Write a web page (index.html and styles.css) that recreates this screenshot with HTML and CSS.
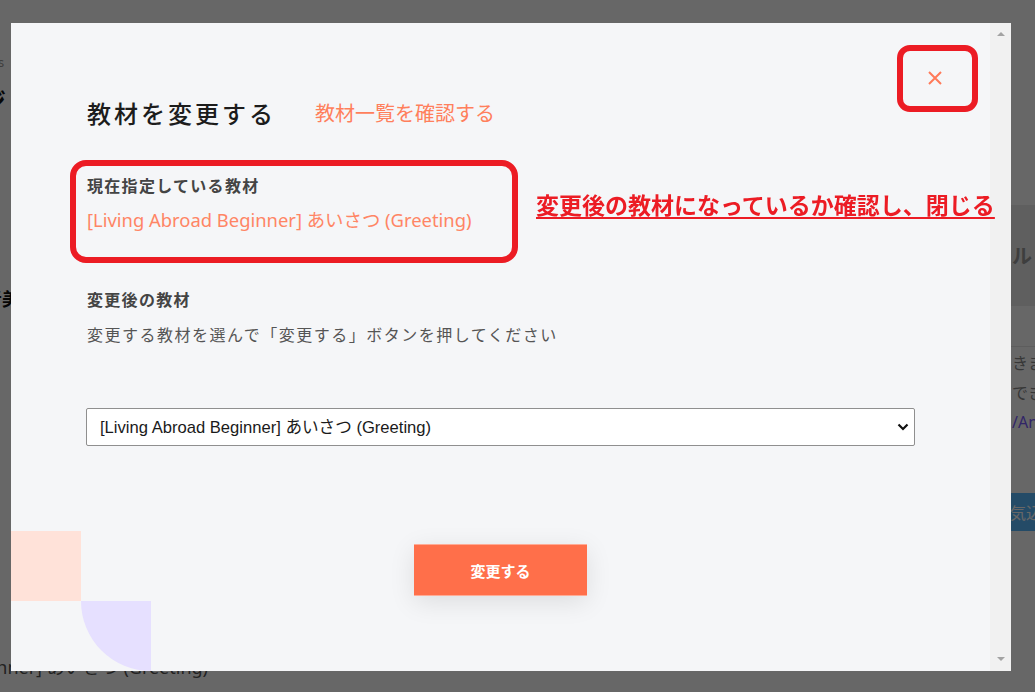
FILE: index.html
```html
<!DOCTYPE html>
<html lang="ja">
<head>
<meta charset="utf-8">
<title>教材を変更する</title>
<link rel="stylesheet" href="styles.css">
</head>
<body>
  <div class="page">
    <div class="bg-main">
      <div class="bg-line bg-line--meta"><span>Students</span></div>
      <div class="bg-line bg-line--heading"><span>マイページ</span></div>
      <div class="bg-line bg-line--name"><span>担当者美</span></div>
      <div class="bg-line bg-line--course"><span>[Living Abroad Beginner] あいさつ (Greeting)</span></div>
    </div>
    <aside class="bg-side">
      <div class="bg-side__head">ル</div>
      <div class="bg-side__sub"></div>
      <p class="bg-side__text">きます</p>
      <p class="bg-side__text">できます</p>
      <p class="bg-side__text bg-side__text--link">/Answer</p>
      <div class="bg-side__btn">意気込み</div>
    </aside>
  </div>

  <div class="overlay"></div>

  <div class="modal" role="dialog" aria-label="教材を変更する">
    <div class="modal__body">
      <button class="modal__close" aria-label="閉じる">
        <svg width="16" height="16" viewBox="0 0 16 16"><path d="M2 2 L14 14 M14 2 L2 14" stroke="#ff7a59" stroke-width="2" fill="none"/></svg>
      </button>
      <div class="modal__head">
        <h2 class="modal__title">教材を変更する</h2>
        <a class="modal__link" href="#">教材一覧を確認する</a>
      </div>
      <section class="field field--current">
        <h3 class="field__label">現在指定している教材</h3>
        <p class="field__value">[Living Abroad Beginner] あいさつ (Greeting)</p>
      </section>
      <section class="field field--new">
        <h3 class="field__label">変更後の教材</h3>
        <p class="field__hint">変更する教材を選んで「変更する」ボタンを押してください</p>
        <div class="select-wrap">
          <select class="select">
            <option>[Living Abroad Beginner] あいさつ (Greeting)</option>
          </select>
          <svg class="select-wrap__chev" width="12" height="8" viewBox="0 0 12 8"><path d="M1.5 1.5 L6 6 L10.5 1.5" stroke="#111" stroke-width="2.2" fill="none"/></svg>
        </div>
      </section>
      <div class="actions">
        <button class="btn">変更する</button>
      </div>
      <div class="deco deco--square"></div>
      <div class="deco deco--quarter"></div>
    </div>
    <div class="scrollbar">
      <span class="scrollbar__arrow scrollbar__arrow--up"></span>
      <span class="scrollbar__arrow scrollbar__arrow--down"></span>
    </div>
  </div>

  <div class="annot annot--current"></div>
  <div class="annot annot--close"></div>
  <p class="annot-note">変更後の教材になっているか確認し、閉じる</p>
</body>
</html>
```

FILE: styles.css
```css
* { box-sizing: border-box; }
html, body { margin: 0; padding: 0; }
body {
  width: 1035px;
  height: 692px;
  overflow: hidden;
  background: #ffffff;
  font-family: "Noto Sans CJK JP", "Noto Sans", sans-serif;
  position: relative;
}

/* background page (dimmed by overlay) */
.page {
  display: flex;
  width: 1035px;
  height: 692px;
  overflow: hidden;
}
.bg-main {
  width: 990px;
  flex: none;
  display: flex;
  flex-direction: column;
  align-items: flex-start;
}
.bg-line {
  display: flex;
  justify-content: flex-end;
  white-space: nowrap;
}
.bg-line span { flex: none; }
.bg-line--meta {
  width: 4px;
  margin-top: 52px;
  font-size: 13px;
  line-height: 20px;
  color: #999;
}
.bg-line--heading {
  width: 6px;
  margin-top: 12px;
  font-size: 24px;
  line-height: 32px;
  font-weight: 700;
  color: #111;
}
.bg-line--name {
  width: 20px;
  margin-top: 169px;
  font-size: 18px;
  line-height: 26px;
  font-weight: 700;
  color: #111;
}
.bg-line--course {
  width: 208px;
  margin-top: 343px;
  font-size: 18px;
  line-height: 26px;
  color: #555;
  font-family: "Noto Sans", "Noto Sans CJK JP", sans-serif;
}

.bg-side {
  width: 300px;
  flex: none;
  margin-top: 205px;
  background: #fff;
}
.bg-side__head {
  height: 101px;
  background: #ebebeb;
  display: flex;
  align-items: center;
  padding-left: 22px;
  font-size: 20px;
  font-weight: 700;
  color: #999;
}
.bg-side__sub {
  height: 41px;
  border-bottom: 1px solid #e6e6e6;
}
.bg-side__text {
  margin: 0;
  padding-left: 22px;
  font-size: 16px;
  line-height: 30px;
  color: #888;
}
.bg-side__text--link { color: #7b5cff; font-family: "Noto Sans", sans-serif; }
.bg-side__btn {
  margin-top: 56px;
  height: 38px;
  background: #5ab9ff;
  color: #fff;
  font-size: 16px;
  line-height: 38px;
  padding-left: 4px;
}

.overlay {
  position: fixed;
  inset: 0;
  background: rgba(0, 0, 0, 0.597);
}

/* modal */
.modal {
  position: fixed;
  left: 11px;
  top: 23px;
  width: 1000px;
  height: 648px;
  display: flex;
}
.modal__body {
  flex: 1;
  position: relative;
  overflow: hidden;
  background: #f5f6f8;
  padding: 72px 76px 0 76px;
}
.modal__close {
  position: absolute;
  top: 39px;
  right: 39px;
  width: 32px;
  height: 32px;
  padding: 0;
  border: none;
  background: transparent;
  display: flex;
  align-items: center;
  justify-content: center;
}
.modal__head {
  display: flex;
  align-items: center;
  gap: 39px;
  height: 36px;
}
.modal__title {
  margin: 0;
  font-size: 24px;
  line-height: 36px;
  font-weight: 500;
  letter-spacing: 3px;
  color: #1c1c1c;
}
.modal__link {
  font-size: 20px;
  line-height: 30px;
  color: #ff7f5c;
  text-decoration: none;
}

.field--current { margin-top: 42px; }
.field--new { margin-top: 54px; }
.field__label {
  margin: 0;
  font-size: 16px;
  line-height: 24px;
  font-weight: 700;
  letter-spacing: 1.3px;
  color: #444;
}
.field__value {
  margin: 9px 0 0;
  font-family: "Noto Sans", "Noto Sans CJK JP", sans-serif;
  font-size: 18.4px;
  line-height: 27px;
  color: #ff8565;
}
.field__hint {
  margin: 11px 0 0;
  font-size: 16px;
  line-height: 24px;
  letter-spacing: 1.5px;
  color: #555;
}
.select-wrap {
  position: relative;
  margin-top: 62px;
  margin-left: -1px;
  width: 829px;
  height: 38px;
}
.select {
  -webkit-appearance: none;
  appearance: none;
  width: 100%;
  height: 100%;
  border: 1px solid #8f8f8f;
  border-radius: 2px;
  background: #fff;
  padding: 0 0 0 13px;
  font-family: "Liberation Sans", "Noto Sans CJK JP", sans-serif;
  font-size: 16.6px;
  color: #1a1a1a;
}
.select-wrap__chev {
  position: absolute;
  right: 6px;
  top: 15px;
  pointer-events: none;
}

.actions {
  margin-top: 98px;
  display: flex;
  justify-content: center;
}
.btn {
  width: 173px;
  height: 52px;
  border: none;
  border-top: 1px solid #ffab95;
  border-bottom: 1px solid #ffab95;
  background: #ff6f4a;
  color: #fff;
  font-family: "Noto Sans CJK JP", sans-serif;
  font-size: 15px;
  font-weight: 700;
  box-shadow: 0 6px 26px rgba(0, 0, 0, 0.1);
}

.deco {
  position: absolute;
  width: 70px;
  height: 70px;
}
.deco--square {
  left: 0;
  bottom: 70px;
  background: #ffe2d9;
}
.deco--quarter {
  left: 70px;
  bottom: 0;
  background: #e6e0ff;
  border-bottom-left-radius: 100%;
}

.scrollbar {
  width: 21px;
  flex: none;
  background: #f1f1f1;
  display: flex;
  flex-direction: column;
  justify-content: space-between;
  align-items: center;
  padding: 9px 0 10px;
}
.scrollbar__arrow {
  width: 0;
  height: 0;
  border-left: 4px solid transparent;
  border-right: 4px solid transparent;
}
.scrollbar__arrow--up { border-bottom: 4px solid #a3a3a3; }
.scrollbar__arrow--down { border-top: 4px solid #a3a3a3; }

/* annotations */
.annot {
  position: absolute;
  border: 6px solid #ec1c24;
}
.annot--current {
  left: 70px;
  top: 160px;
  width: 448px;
  height: 103px;
  border-radius: 16px;
}
.annot--close {
  left: 897px;
  top: 45px;
  width: 81px;
  height: 67px;
  border-radius: 13px;
}
.annot-note {
  position: absolute;
  left: 536px;
  top: 189px;
  margin: 0;
  font-family: "Noto Sans CJK JP", sans-serif;
  font-size: 23px;
  line-height: 30px;
  font-weight: 700;
  color: #ec1c24;
  white-space: nowrap;
  text-decoration: underline;
  text-decoration-thickness: 2px;
  text-underline-offset: 3px;
}
```
